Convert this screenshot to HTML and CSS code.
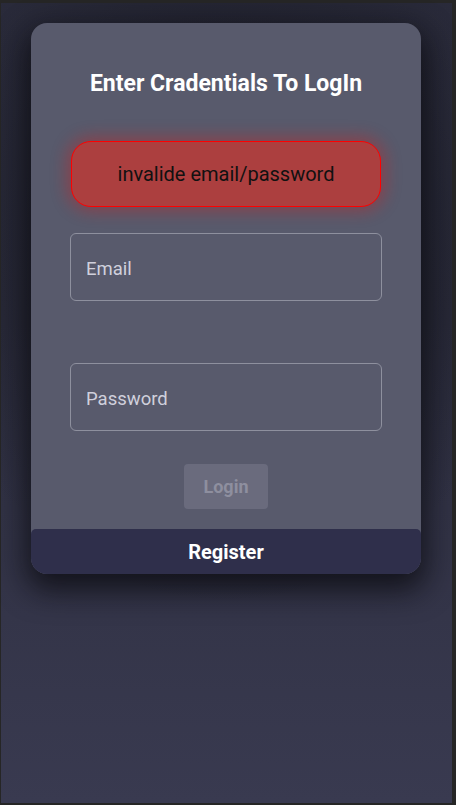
FILE: index.html
```html
<!DOCTYPE html>
<html lang="en">
<head>
<meta charset="utf-8">
<title>Login</title>
<link rel="stylesheet" href="styles.css">
</head>
<body>
<div class="frame">
  <div class="card">
    <h2 class="title">Enter Cradentials To LogIn</h2>
    <div class="error">invalide email/password</div>
    <form class="form">
      <input class="field" type="email" placeholder="Email">
      <input class="field field-pass" type="password" placeholder="Password">
      <button class="login" type="button" disabled>Login</button>
    </form>
    <div class="register">Register</div>
  </div>
</div>
</body>
</html>
```

FILE: styles.css
```css
html, body {
  margin: 0;
  padding: 0;
}
body {
  background: #262626;
  font-family: Roboto, "Liberation Sans", sans-serif;
  width: 456px;
  height: 805px;
  overflow: hidden;
}
.frame {
  margin: 3px 4px 2px 1px;
  height: 800px;
  padding-top: 20px;
  box-sizing: border-box;
  background:
    radial-gradient(ellipse 70% 45% at 50% 30%, rgba(22,23,30,0.85), rgba(22,23,30,0) 100%),
    linear-gradient(180deg, #2a2b3b 0%, #2c2d3e 40%, #393a50 100%);
}
.card {
  width: 390px;
  margin: 0 0 0 30px;
  background: #585a6c;
  border-radius: 16px;
  box-shadow: 0 12px 30px 4px rgba(8,8,12,0.75);
  overflow: hidden;
  display: flex;
  flex-direction: column;
  align-items: center;
}
.title {
  margin: 47px 0 0;
  font-size: 23px;
  font-weight: 700;
  line-height: 27px;
  color: #ffffff;
}
.error {
  margin-top: 44px;
  width: 310px;
  height: 66px;
  box-sizing: border-box;
  border: 1px solid #ff0000;
  border-radius: 20px;
  background: #ac3f3f;
  box-shadow: 0 0 16px 4px rgba(210,30,30,0.4);
  color: #111111;
  font-size: 20px;
  display: flex;
  align-items: center;
  justify-content: center;
}
.form {
  margin: 26px 0 0;
  display: flex;
  flex-direction: column;
  align-items: center;
}
.field {
  width: 312px;
  height: 68px;
  box-sizing: border-box;
  border: 1px solid #8e909e;
  border-radius: 6px;
  background: transparent;
  padding: 3px 15px 0;
  font-family: Roboto, "Liberation Sans", sans-serif;
  font-size: 18.5px;
  color: #d4d4de;
  outline: none;
}
.field::placeholder {
  color: #d0d0dc;
}
.field-pass {
  margin-top: 62px;
}
.login {
  margin-top: 33px;
  width: 84px;
  height: 45px;
  border: none;
  border-radius: 4px;
  background: #6a6b7d;
  color: #8e8f9f;
  font-family: Roboto, "Liberation Sans", sans-serif;
  font-size: 18px;
  font-weight: 700;
}
.register {
  margin-top: 20px;
  align-self: stretch;
  height: 45px;
  background: #2f2f4b;
  border-radius: 5px 5px 0 0;
  color: #ffffff;
  font-size: 20px;
  font-weight: 700;
  display: flex;
  align-items: center;
  justify-content: center;
}
```
